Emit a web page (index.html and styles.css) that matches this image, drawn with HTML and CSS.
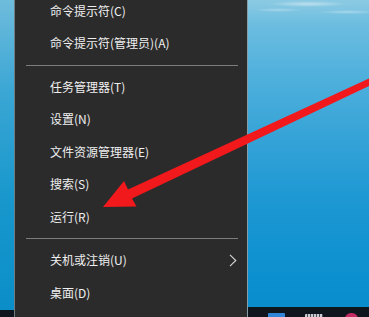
FILE: index.html
```html
<!DOCTYPE html>
<html lang="zh-CN">
<head>
<meta charset="utf-8">
<title>Win+X</title>
<link rel="stylesheet" href="styles.css">
</head>
<body>
<div class="screen">
  <div class="strip">
    <div class="strip-sky"></div>
    <div class="taskbar"></div>
  </div>
  <nav class="menu">
    <ul class="list">
      <li class="item">命令提示符(C)</li>
      <li class="item">命令提示符(管理员)(A)</li>
      <li class="sep"></li>
      <li class="item">任务管理器(T)</li>
      <li class="item">设置(N)</li>
      <li class="item">文件资源管理器(E)</li>
      <li class="item">搜索(S)</li>
      <li class="item">运行(R)</li>
      <li class="sep"></li>
      <li class="item">关机或注销(U)
        <svg class="chev" width="8" height="13" viewBox="0 0 8 13"><path d="M1 0.8 L6.8 6.5 L1 12.2" fill="none" stroke="#d8d8d8" stroke-width="1.1"/></svg>
      </li>
      <li class="item">桌面(D)</li>
    </ul>
  </nav>
  <div class="desktop">
    <div class="sky"></div>
    <div class="taskbar">
      <span class="tb tb-blue"></span>
      <span class="tb tb-white"></span>
      <span class="tb tb-pink"></span>
    </div>
  </div>
  <svg class="arrow" width="369" height="317" viewBox="0 0 369 317">
    <polygon points="103,207 124,181 128,189.5 371,77.5 373,84 132,198.5 136.5,206.5" fill="#f2191c"/>
  </svg>
</div>
</body>
</html>
```
FILE: styles.css
```css
html, body {
  margin: 0;
  padding: 0;
  background: #2c2b2c;
}
.screen {
  position: relative;
  width: 369px;
  height: 317px;
  overflow: hidden;
  display: grid;
  grid-template-columns: 15px 232px 1fr;
  font-family: "Noto Sans CJK SC", "Noto Sans", sans-serif;
}
.strip {
  display: flex;
  flex-direction: column;
  border-right: 1px solid rgba(190, 225, 240, 0.45);
  box-sizing: border-box;
}
.strip-sky {
  flex: 1;
  background: linear-gradient(180deg, #6fbcdc 0%, #3aa6d4 30%, #1797cc 65%, #0b8ec8 100%);
}
.strip .taskbar {
  height: 7px;
  flex: none;
}
.menu {
  background: #2c2b2c;
  overflow: hidden;
}
.list {
  list-style: none;
  margin: -5.5px 0 0 0;
  padding: 0;
}
.item {
  height: 32.5px;
  display: flex;
  align-items: center;
  justify-content: space-between;
  padding: 0 10px 0 35px;
  color: #efefef;
  font-size: 12px;
  line-height: 1;
  white-space: nowrap;
}
.chev {
  display: block;
  margin-top: 0;
}
.sep {
  height: 11px;
  display: flex;
  align-items: center;
  padding: 0 9px 0 11px;
}
.sep::before {
  content: "";
  display: block;
  flex: 1;
  height: 1px;
  background: #7d7c7d;
}
.desktop {
  display: flex;
  flex-direction: column;
  border-left: 1px solid rgba(200, 230, 245, 0.6);
}
.sky {
  flex: 1;
  background:
    radial-gradient(ellipse 40px 3px at 60px 4px, rgba(255,255,255,0.45), rgba(255,255,255,0) 100%),
    radial-gradient(ellipse 30px 2px at 100px 12px, rgba(255,255,255,0.35), rgba(255,255,255,0) 100%),
    radial-gradient(ellipse 25px 2px at 30px 10px, rgba(255,255,255,0.3), rgba(255,255,255,0) 100%),
    linear-gradient(180deg, #8ccae2 0%, #6cbde0 8%, #4fb0dc 25%, #35a3d7 45%, #1d98d3 65%, #0f91d0 85%, #0a8dcd 100%);
}
.taskbar {
  height: 10px;
  flex: none;
  background: #0e151c;
  position: relative;
}
.tb {
  position: absolute;
  top: 6px;
  height: 6px;
  border-radius: 1px;
}
.tb-blue {
  left: 20px;
  width: 17px;
  background: #2f86d6;
}
.tb-white {
  left: 57px;
  width: 18px;
  height: 4px;
  top: 7px;
  background: repeating-linear-gradient(90deg, #c9ccd0 0 2px, #4a5058 2px 3px);
}
.tb-pink {
  left: 97px;
  width: 13px;
  border-radius: 6px 6px 0 0;
  background: #c42a64;
}
.arrow {
  position: absolute;
  left: 0;
  top: 0;
  pointer-events: none;
}
```
